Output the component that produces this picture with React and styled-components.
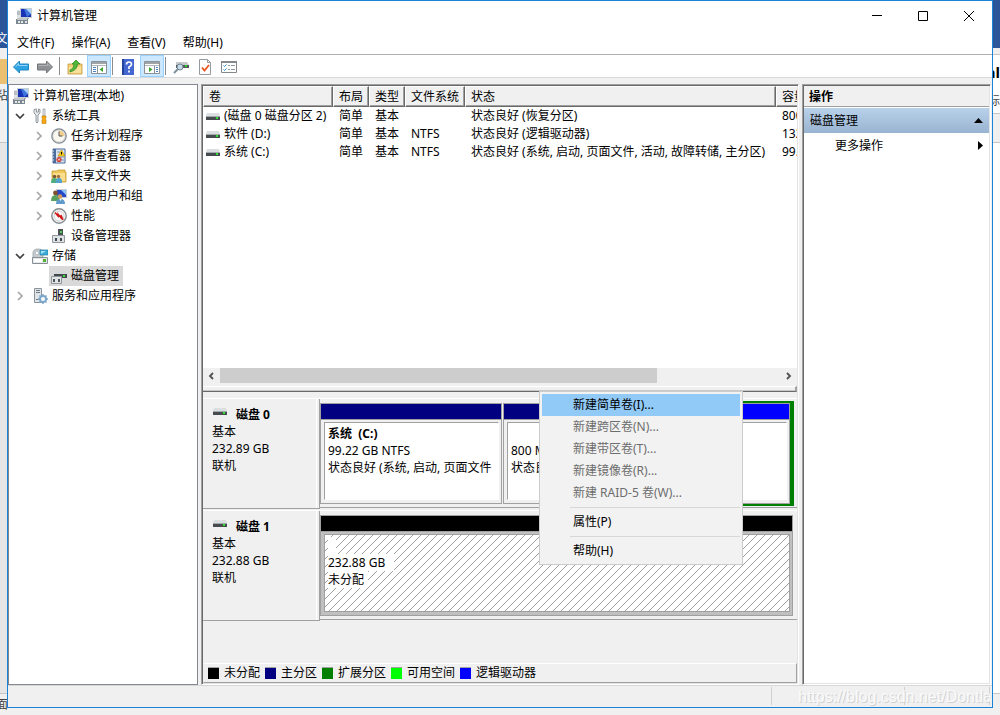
import React from "react";
import styled, { createGlobalStyle, css } from "styled-components";

const GlobalStyle = createGlobalStyle`
  *, *::before, *::after { box-sizing: border-box; }
  body {
    margin: 0;
    background: #f0f0f0;
    color: #000;
    font: 12px/18px "Noto Sans", "Noto Sans CJK SC", sans-serif;
    overflow: hidden;
  }
  button { font: inherit; color: inherit; margin: 0; padding: 0; border: 0; background: none; }
  svg { display: block; flex: none; }
  ul { list-style: none; margin: 0; padding: 0; }
`;

/* ---------- desktop behind the window ---------- */

const Desktop = styled.div`
  display: grid;
  grid-template-rows: 100vh;
  > * { grid-area: 1 / 1; }
`;

const Backdrop = styled.div`
  display: grid;
  grid-template-columns: 8px 1fr 8px;
  overflow: hidden;
`;

const Strip = styled.div`
  display: flex;
  flex-direction: column;
  overflow: hidden;
  white-space: nowrap;
`;

const Band = styled.div`
  flex: ${(p) => (p.$grow ? "1" : "none")};
  height: ${(p) => p.$h}px;
  display: flex;
  align-items: ${(p) => p.$align || "center"};
  justify-content: ${(p) => (p.$end ? "flex-end" : "flex-start")};
  overflow: hidden;
  background: ${(p) => p.$bg};
  color: ${(p) => p.$fg || "#444"};
  border-bottom: ${(p) => (p.$line ? "1px solid #c6c6c6" : "0")};
  font-weight: ${(p) => (p.$bold ? 700 : 400)};
  font-size: ${(p) => (p.$bold ? 15 : 12)}px;
`;

/* ---------- window frame ---------- */

const Window = styled.main`
  margin: 0 7px 7px;
  border: 1px solid #1883d7;
  background: #f0f0f0;
  display: flex;
  flex-direction: column;
  min-width: 0;
  overflow: hidden;
  position: relative;
`;

const TitleBar = styled.header`
  display: flex;
  align-items: center;
  height: 30px;
  background: #fff;
  padding-left: 8px;
  h1 { font-size: 12px; font-weight: 400; margin: 0 auto 0 5px; }
`;

const CaptionButton = styled.button`
  width: 46px;
  height: 30px;
  display: flex;
  align-items: center;
  justify-content: center;
`;

const MenuBar = styled.nav`
  display: flex;
  height: 24px;
  background: #fff;
  border-bottom: 1px solid #b0b0b0;
  padding-left: 1px;
  button { padding: 0 9px 0 8px; }
`;

const ToolBar = styled.div`
  display: flex;
  align-items: center;
  height: 23px;
  background: #fff;
  border-bottom: 1px solid #d9d9d9;
  padding-left: 1px;
`;

const Tool = styled.button`
  width: 24px;
  height: 22px;
  padding-top: 1px;
  display: flex;
  align-items: center;
  justify-content: center;
  ${(p) => p.$on && css`
    background: #cce8ff;
    border: 1px solid #99d1ff;
  `}
`;

const ToolDivider = styled.span`
  width: 1px;
  height: 18px;
  margin: 0 3px 0 ${(p) => (p.$wide ? 2 : 1)}px;
  background: #8c8c8c;
`;

const Body = styled.div`
  flex: 1;
  min-height: 0;
  display: grid;
  grid-template-columns: 190px minmax(0, 1fr) 189px;
  padding: 6px 1px 0 0;
`;

const sunken = css`
  border: 1px solid;
  border-color: #a0a0a0 #fff #fff #a0a0a0;
  padding: 1px;
  box-shadow: inset 1px 1px #696969, inset -1px -1px #e3e3e3;
`;

/* ---------- tree ---------- */

const TreePane = styled.nav`
  background: #fff;
  border: 1px solid #828790;
  padding-top: 1px;
`;

const TreeRow = styled.li`
  display: flex;
  align-items: center;
  height: 20px;
  padding-left: ${(p) => p.$level * 19}px;
`;

const Twisty = styled.button`
  width: 16px;
  height: 20px;
  margin: 0 4px 0 -16px;
  display: flex;
  align-items: center;
  justify-content: center;
  visibility: ${(p) => (p.$empty ? "hidden" : "visible")};
`;

const TreeItem = styled.button`
  display: flex;
  align-items: center;
  gap: 4px;
  height: 20px;
  line-height: 20px;
  padding: 0 4px 0 2px;
  margin-left: -2px;
  background: ${(p) => (p.$selected ? "#d9d9d9" : "transparent")};
`;

/* ---------- volume list ---------- */

const CenterPane = styled.section`
  ${sunken}
  margin: 0 3px 0 3px;
  display: flex;
  flex-direction: column;
  min-width: 0;
`;

const ListArea = styled.div`
  flex: 1;
  min-height: 0;
  background: #fff;
  overflow: hidden;
`;

const VolumeTable = styled.table`
  border-collapse: separate;
  border-spacing: 0;
  table-layout: fixed;
  width: 640px;
  th, td { padding: 0; text-align: left; font-weight: 400; white-space: nowrap; }
  th {
    height: 21px;
    line-height: 18px;
    padding: 1px 0 0 5px;
    background: #f0f0f0;
    border: 1px solid;
    border-color: #fff #696969 #696969 #fff;
    box-shadow: inset -1px -1px #a0a0a0;
  }
  td { height: 18px; line-height: 18px; padding-left: 6px; }
  td:first-child { padding-left: 3px; }
`;

const NameCell = styled.span`
  display: flex;
  align-items: center;
  gap: 4px;
`;

const ScrollBar = styled.div`
  height: 18px;
  display: flex;
  align-items: flex-start;
  background: #f0f0f0;
  button {
    width: 17px;
    height: 16px;
    display: flex;
    align-items: center;
    justify-content: center;
  }
`;

const Track = styled.div`
  flex: 1;
  height: 15px;
`;

const Thumb = styled.div`
  width: 78%;
  height: 15px;
  background: #cdcdcd;
`;

const Splitter = styled.div`
  height: 6px;
  border-top: 1px solid #fff;
  border-right: 2px solid #a0a0a0;
  border-bottom: 1px solid #696969;
  box-shadow: inset 0 -1px #c8c8c8;
`;

/* ---------- disk map ---------- */

const DiskPane = styled.div`
  position: relative;
  height: 291px;
  padding-top: 6px;
  display: flex;
  flex-direction: column;
`;

const DiskRow = styled.div`
  display: flex;
  height: 112px;
  padding-bottom: 1px;
  border-top: 1px solid #fff;
`;

const DiskCell = styled.div`
  flex: none;
  width: 117px;
  padding-right: 2px;
  border-right: 1px solid #a0a0a0;
  border-bottom: 1px solid #a0a0a0;
`;

const DiskLabel = styled.div`
  height: 100%;
  padding: 6px 0 0 9px;
  border-right: 1px solid #fff;
  line-height: 17px;
  b { display: flex; gap: 9px; padding-left: 1px; svg { margin-top: 2px; } }
`;

const DiskName = styled.span`
  padding-top: 1px;
`;

const Volumes = styled.div`
  flex: 1;
  min-width: 0;
  display: flex;
  margin-bottom: 1px;
  padding: 2px 3px 1px 0;
  border-bottom: 1px solid #a0a0a0;
`;

const Volume = styled.div`
  flex: ${(p) => (p.$width ? `0 0 ${p.$width}px` : "1")};
  min-width: 0;
  display: flex;
  flex-direction: column;
  margin: ${(p) => (p.$framed ? "0" : "2px 1px 2px 0")};
  border: 1px solid #a0a0a0;
  padding: 0;
  background: ${(p) => (p.$selected ? "#c0c0c0" : "#f0f0f0")};
`;

const VolumeBar = styled.div`
  height: 16px;
  background: ${(p) => p.$color};
  border-bottom: 1px solid #a0a0a0;
`;

const VolumeBox = styled.div`
  flex: 1;
  min-height: 0;
  display: grid;
  margin: 2px 2px 3px 3px;
  background: #fff;
  border: 1px solid;
  border-color: ${(p) => (p.$selected ? "#a0a0a0" : "#a0a0a0 #fff #fff #a0a0a0")};
  overflow: hidden;
  > * { grid-area: 1 / 1; }
`;

const VolumeText = styled.div`
  display: flex;
  flex-direction: column;
  align-items: flex-start;
  padding: 2px 0 0 3px;
  line-height: 17px;
  white-space: pre;
  overflow: hidden;
  span, b { min-height: 17px; }
`;

const WhiteLine = styled.span`
  background: #fff;
  padding-right: ${(p) => p.$pad}px;
`;

const Extended = styled.div`
  flex: 1;
  min-width: 0;
  display: flex;
  padding: 2px 4px;
  background: #008000;
`;

const Legend = styled.div`
  display: flex;
  align-items: center;
  gap: 5px;
  height: 20px;
  margin-top: auto;
  padding-left: 4px;
  border: 1px solid;
  border-color: #fff #a0a0a0 #a0a0a0 transparent;
  white-space: nowrap;
  span { display: flex; align-items: center; gap: 5px; }
`;

const Swatch = styled.i`
  width: 11px;
  height: 12px;
  background: ${(p) => p.$color};
  border-top: 1px solid #a0a0a0;
`;

/* ---------- context menu ---------- */

const ContextMenu = styled.div`
  position: absolute;
  left: 336px;
  top: -1px;
  width: 204px;
  padding: 2px;
  background: #f2f2f2;
  border: 1px solid #ccc;
  button {
    display: block;
    width: 100%;
    height: 22px;
    line-height: 22px;
    padding-left: 31px;
    text-align: left;
  }
  button:disabled { color: #6d6d6d; }
  hr { height: 1px; margin: 3px 0 3px 28px; border: 0; background: #d7d7d7; }
`;

const MenuChoice = styled.button`
  && { background: ${(p) => (p.$active ? "#91c9f7" : "transparent")}; }
`;

/* ---------- actions ---------- */

const ActionsPane = styled.aside`
  ${sunken}
  background: #fff;
  h2 {
    margin: 0 0 1px;
    padding: 1px 0 0 5px;
    height: 21px;
    font-size: 12px;
    line-height: 19px;
    font-weight: 700;
    background: #f0f0f0;
    border-bottom: 1px solid #a0a0a0;
  }
`;

const ActionRow = styled.button`
  display: flex;
  align-items: center;
  justify-content: space-between;
  width: 100%;
  height: 25px;
  padding: 0 6px 0 ${(p) => (p.$head ? 6 : 31)}px;
  background: ${(p) => (p.$head ? "linear-gradient(#b9d1ea, #99b4d1)" : "#fff")};
`;

/* ---------- status bar ---------- */

const StatusBar = styled.footer`
  height: 22px;
  display: flex;
  padding: 1px 2px 2px 0;
  border-top: 1px solid #d7d7d7;
`;

const StatusCell = styled.div`
  flex: ${(p) => (p.$width ? `0 0 ${p.$width}px` : "1")};
  border-right: 1px solid #d0d0d0;
`;

const Watermark = styled.div`
  position: absolute;
  right: 1px;
  bottom: 0;
  width: 193px;
  overflow: hidden;
  white-space: nowrap;
  font: 16px/20px "Liberation Sans", sans-serif;
  color: #fafafa;
  text-shadow: 1px 1px #d2d2d2;
`;

/* ---------- icons ---------- */

const Svg = ({ w = 16, h = 16, children }) => (
  <svg width={w} height={h} viewBox={`0 0 ${w} ${h}`} fill="none" aria-hidden="true">{children}</svg>
);

const ComputerIcon = () => (
  <Svg>
    <path d="M1 2h3v9H1z" fill="#dfe3e6" />
    <path d="M1 4h3M1 6h3" stroke="#8e979f" />
    <path d="M4 0h12v10H4z" fill="#c9ced2" />
    <path d="M5 1h10v8H5z" fill="#1732b4" />
    <path d="M8 1h7v5l-4 3z" fill="#3f74dc" />
    <path d="M10 1h5v5z" fill="#a9d2fb" />
    <path d="M8 10h5v1H8z" fill="#a6adb2" />
    <path d="M0 11h12v5H0z" fill="#7b868e" />
    <path d="M1 10h10v2H1z" fill="#c0c6ca" />
    <path d="M2 13h2v2H2zM5 13h2v2H5zM9 13h2v2H9z" fill="#e3e8ea" />
  </Svg>
);
const ToolsIcon = () => (
  <Svg>
    <path d="M2 1.500v3.500l2 2v7q1 2 2 0V7l2-2V1.500L6.500 1v3h-2V1z" fill="#e4e7e9" stroke="#7c858b" strokeWidth=".8" />
    <path d="M11 1h2v7h-2z" fill="#eef0f1" stroke="#8a9298" strokeWidth=".7" />
    <path d="M10 8h4v2l-.7 1 .7 1v3.500h-4V12l.7-1-.7-1z" fill="#f4a915" stroke="#c77c05" strokeWidth=".6" />
  </Svg>
);
const ClockIcon = () => (
  <Svg>
    <circle cx="8" cy="8" r="7.200" fill="#d3d7da" stroke="#858b91" strokeWidth="1.200" />
    <circle cx="8" cy="8" r="5.600" fill="#fbf8ee" />
    <path d="M8 8V2.500A5.500 5.500 0 0 1 13.500 8z" fill="#f2cf8c" />
    <path d="M8 3.500V8h3.500" stroke="#4f565c" />
  </Svg>
);
const EventIcon = () => (
  <Svg>
    <path d="M2 1h12v14H2z" fill="#dce6f3" stroke="#4a6a9a" />
    <path d="M2 1h3v14H2z" fill="#4d6c9e" />
    <path d="M1 3h2M1 6h2M1 9h2M1 12h2" stroke="#cfd8e4" />
    <path d="M7 9h6M7 12h6M6 4h3" stroke="#7c92b4" />
    <path d="M10.500 2 14 8H7z" fill="#ffd21e" stroke="#b98c00" strokeWidth=".6" />
    <path d="M10.500 4v2.500" stroke="#000" />
    <circle cx="8" cy="11.500" r="2.600" fill="#d23c32" />
    <path d="m7 10.500 2 2m0-2-2 2" stroke="#fff" strokeWidth=".8" />
  </Svg>
);
const ShareIcon = () => (
  <Svg>
    <path d="M1 3h5l1-1h7v2h1v10H1z" fill="#f0c95b" stroke="#c79a33" strokeWidth=".8" />
    <path d="M2 5h12v8H2z" fill="#fadf8e" />
    <circle cx="3.500" cy="8.500" r="1.700" fill="#7b5432" />
    <circle cx="7.500" cy="8.500" r="1.700" fill="#a8703e" />
    <path d="M0 15q0-5 3.500-5T7 15z" fill="#4fae7b" />
    <path d="M4.500 15q0-5 3.500-5t3 5z" fill="#54a3cc" />
  </Svg>
);
const UsersIcon = () => (
  <Svg>
    <path d="M5 1h11v9H5z" fill="#c7ced6" />
    <path d="M6 2h9v7H6z" fill="#2448c8" />
    <path d="M10 2h5v5z" fill="#8cc1f5" />
    <circle cx="4.500" cy="5" r="2.400" fill="#80522d" />
    <path d="M0 13q0-6 4.500-6T9 13z" fill="#58a05b" />
    <circle cx="9" cy="8.500" r="2.300" fill="#d49a5b" />
    <path d="M5 16q0-5 4.500-5t4.500 5z" fill="#5f9aca" />
    <path d="m8.500 11 1 2 1-2z" fill="#fff" />
  </Svg>
);
const PerfIcon = () => (
  <Svg>
    <circle cx="8" cy="8" r="7.200" fill="#f8f8f8" stroke="#868c91" strokeWidth="1.400" />
    <circle cx="8" cy="8" r="5" stroke="#c3c7ca" strokeWidth=".8" />
    <path d="M4 4.500 7 8V6l3 4V7l2 5" stroke="#d01818" strokeWidth="1.400" />
  </Svg>
);
const DeviceIcon = () => (
  <Svg>
    <path d="M7 1h5v8H7z" fill="#4c5357" />
    <path d="M9 3h2v2H9z" fill="#48d048" />
    <path d="M1.500 7.500h12v7h-12z" fill="#dfe2e4" stroke="#92999d" />
    <path d="M4 10h2v3H4zM9 10h2v3H9z" fill="#43494d" />
  </Svg>
);
const StorageIcon = () => (
  <Svg>
    <path d="M1 5q0-4 5-4t5 4v5H1z" fill="#c6ccd0" stroke="#9aa2a8" strokeWidth=".8" />
    <circle cx="5" cy="5" r="1.800" fill="#fff" stroke="#9ca4a9" strokeWidth=".6" />
    <path d="M8 2h8v5H8z" fill="#3cabd8" stroke="#2683ab" strokeWidth=".7" />
    <path d="M9 3h5L9 6z" fill="#a7e1f6" />
    <path d="M.5 9.500h15v6H.5z" fill="#e5e7e9" stroke="#878f94" />
    <path d="M2 11h8v3H2z" fill="#fff" />
    <path d="M11 11h3v3h-3z" fill="#50b332" />
  </Svg>
);
const DiskMgmtIcon = () => (
  <Svg>
    <path d="M4 3h11l1 3H3z" fill="#d4d8da" />
    <path d="M3 6h13v4H3z" fill="#42484b" />
    <path d="M12 7h2v2h-2z" fill="#3ee03e" />
    <path d="M.5 8.500h10v7H.5z" fill="#e1e4e5" stroke="#91989c" />
    <path d="M2 11h2v3H2zM7 11h2v3H7z" fill="#50565a" />
  </Svg>
);
const ServicesIcon = () => (
  <Svg>
    <path d="M2.500.5h7v14h-7z" fill="#e1e5e8" stroke="#8b949b" />
    <path d="M4 2.500h4M4 4.500h4M4 11.500h3" stroke="#6f7c86" />
    <circle cx="11" cy="11" r="3" stroke="#7fa7c9" strokeWidth="2" fill="#fff" />
    <path d="M11 6v2M11 14v2M6 11h2M14 11h2M7.500 7.500 9 9M13 13l1.500 1.500M14.500 7.500 13 9M9 13l-1.500 1.500" stroke="#7fa7c9" strokeWidth="1.500" />
  </Svg>
);
const DriveIcon = () => (
  <Svg w={14} h={9}>
    <path d="M1 1h12l1 3H0z" fill="#dcdfe0" />
    <path d="M0 4h14v1H0z" fill="#a4aaad" />
    <path d="M0 5h14v3H0z" fill="#454b4e" />
    <path d="M10 5h2v2h-2z" fill="#2de02d" />
  </Svg>
);
const ArrowIcon = ({ forward }) => (
  <Svg>
    <path
      d={forward ? "M15.500 8 9.500 2v3H.5v6h9v3z" : "M.5 8 6.500 2v3h9v6h-9v3z"}
      fill={forward ? "#8e9194" : "#2fa3e2"}
      stroke={forward ? "#737679" : "#1f86c4"}
    />
    <path d={forward ? "M1.500 6.500h9V4.500L13.500 8" : "M2.500 8l3-3.500v2h9"} stroke={forward ? "#b0b2b4" : "#93d5fa"} />
  </Svg>
);
const FolderUpIcon = () => (
  <Svg>
    <path d="M1 5h5l1-2h3l1 2h4v10H1z" fill="#f2d079" stroke="#c59a3d" strokeWidth=".8" />
    <path d="M2 8h12v6H2z" fill="#f9e09a" />
    <path d="M3 11q4-1 4-6H5l4-4 4 4h-2.500q0 6-7.500 8z" fill="#4fb83c" stroke="#2d8a20" strokeWidth=".7" />
  </Svg>
);
const PanelIcon = ({ right }) => (
  <Svg>
    <path d="M.5 2.500h15v12H.5z" fill="#fff" stroke="#8a9298" />
    <path d="M1 3h14v2H1z" fill="#9ea5aa" />
    <path d="M1 6.500h14" stroke="#b2b8bc" />
    <path d={right ? "M10.500 7v8" : "M6.500 7v8"} stroke="#8a9298" />
    <path d={right ? "M12 8.500h2M12 10.500h2M12 12.500h2" : "M2 8.500h3M2 10.500h3M2 12.500h3"} stroke="#4b86c4" />
    <path d={right ? "m5 8 3.500 2.500L5 13z" : "M12 8l-3.500 2.500L12 13z"} fill="#3ba52c" />
  </Svg>
);
const HelpIcon = () => (
  <Svg>
    <path d="M2 0h12v16H2z" fill="#4468d0" />
    <path d="M2 0h2v16H2z" fill="#24449c" />
    <path d="M6.500 5.500q0-2.500 2.500-2.500t2.500 2.200Q11.500 7 9 8v2M9 11.500v2" stroke="#fff" strokeWidth="1.700" />
  </Svg>
);
const DriveSearchIcon = () => (
  <Svg>
    <path d="M3 3h11l2 3H3z" fill="#c6cacd" />
    <path d="M3 6h13v3H3z" fill="#4f5659" />
    <path d="M12 6h2v2h-2z" fill="#2dd62d" />
    <path d="m1 14 4-4" stroke="#7d8f9b" strokeWidth="2" />
    <circle cx="7" cy="8" r="3" fill="#c4dcea" stroke="#70828e" />
  </Svg>
);
const CheckDocIcon = () => (
  <Svg>
    <path d="M2.500.5h8l3 3v12h-11z" fill="#fdfdfd" stroke="#949a9f" />
    <path d="M10.500.5v3h3" stroke="#949a9f" />
    <path d="m5 8.500 2.500 3L12 6" stroke="#ea5420" strokeWidth="1.800" />
  </Svg>
);
const CheckListIcon = () => (
  <Svg>
    <path d="M.5 2.500h15v11H.5z" fill="#fff" stroke="#83898d" />
    <path d="M0 3h16" stroke="#83898d" strokeWidth="2" />
    <path d="m2.500 6.500 1 1 2-2M2.500 10.500l1 1 2-2" stroke="#3187ca" />
    <path d="M7 6.500h2M10 6.500h4M7 10.500h2M10 10.500h4" stroke="#8d969c" />
  </Svg>
);
const Chevron = ({ open }) =>
  open ? (
    <Svg w={10} h={10}><path d="m1 3 4 4 4-4" stroke="#404040" strokeWidth="1.700" /></Svg>
  ) : (
    <Svg w={10} h={10}><path d="m3 1 4 4-4 4" stroke="#a6a6a6" strokeWidth="1.700" /></Svg>
  );
const ScrollChevron = ({ right }) => (
  <Svg w={8} h={8}><path d={right ? "m2 1 3 3-3 3" : "M5 1 2 4l3 3"} stroke="#505050" strokeWidth="1.800" /></Svg>
);

/* ---------- data ---------- */

const tree = [
  { level: 0, icon: ComputerIcon, text: "计算机管理(本地)" },
  { level: 1, icon: ToolsIcon, text: "系统工具", state: "open" },
  { level: 2, icon: ClockIcon, text: "任务计划程序", state: "closed" },
  { level: 2, icon: EventIcon, text: "事件查看器", state: "closed" },
  { level: 2, icon: ShareIcon, text: "共享文件夹", state: "closed" },
  { level: 2, icon: UsersIcon, text: "本地用户和组", state: "closed" },
  { level: 2, icon: PerfIcon, text: "性能", state: "closed" },
  { level: 2, icon: DeviceIcon, text: "设备管理器" },
  { level: 1, icon: StorageIcon, text: "存储", state: "open" },
  { level: 2, icon: DiskMgmtIcon, text: "磁盘管理", selected: true },
  { level: 1, icon: ServicesIcon, text: "服务和应用程序", state: "closed" },
];

const columns = [["卷", 130], ["布局", 36], ["类型", 36], ["文件系统", 60], ["状态", 311], ["容量", 67]];

const rows = [
  ["(磁盘 0 磁盘分区 2)", "简单", "基本", "", "状态良好 (恢复分区)", "800 MB"],
  ["软件 (D:)", "简单", "基本", "NTFS", "状态良好 (逻辑驱动器)", "132.87 GB"],
  ["系统 (C:)", "简单", "基本", "NTFS", "状态良好 (系统, 启动, 页面文件, 活动, 故障转储, 主分区)", "99.22 GB"],
];

const legend = [
  ["#000", "未分配"],
  ["#000080", "主分区"],
  ["#008000", "扩展分区"],
  ["#0f0", "可用空间"],
  ["#00f", "逻辑驱动器"],
];

const DiskHeader = ({ name, size }) => (
  <DiskCell>
    <DiskLabel>
      <b><DriveIcon /><DiskName>{name}</DiskName></b>
      <div>基本</div>
      <div>{size}</div>
      <div>联机</div>
    </DiskLabel>
  </DiskCell>
);

const VolumeBlock = ({ color, width, framed, title, lines }) => (
  <Volume $width={width} $framed={framed}>
    <VolumeBar $color={color} />
    <VolumeBox>
      <VolumeText>
        <b>{title}</b>
        {lines.map((l) => <span key={l}>{l}</span>)}
      </VolumeText>
    </VolumeBox>
  </Volume>
);

export default function App() {
  return (
    <>
      <GlobalStyle />
      <Desktop>
        <Backdrop aria-hidden="true">
          <Strip>
            <Band $h={48} $bg="#2b579a" $fg="#fff" $end $align="flex-end">文</Band>
            <Band $h={11} $bg="#f0f0f0" />
            <Band $h={25} $bg="#ecc071" />
            <Band $h={24} $bg="#f0f0f0" $end>粘</Band>
            <Band $h={35} $bg="#f0f0f0" $line />
            <Band $grow $bg="#e6e6e6" $line />
            <Band $h={21} $bg="#f0f0f0" $end>页面</Band>
          </Strip>
          <Strip />
          <Strip>
            <Band $h={48} $bg="#2b579a" />
            <Band $h={7} $bg="#f0f0f0" $line />
            <Band $h={33} $bg="#fff" $fg="#000" $bold $end>al</Band>
            <Band $h={26} $bg="#fff" $line $end>标</Band>
            <Band $h={29} $bg="#f0f0f0" $line />
            <Band $grow $bg="#fff" $line />
            <Band $h={21} $bg="#f0f0f0" />
          </Strip>
        </Backdrop>

        <Window>
          <TitleBar>
            <ComputerIcon />
            <h1>计算机管理</h1>
            <CaptionButton aria-label="最小化"><Svg w={10} h={10}><path d="M0 4.500h10" stroke="#000" /></Svg></CaptionButton>
            <CaptionButton aria-label="最大化"><Svg w={10} h={10}><path d="M.5.5h9v9h-9z" stroke="#000" /></Svg></CaptionButton>
            <CaptionButton aria-label="关闭"><Svg w={10} h={10}><path d="m0 0 10 10M10 0 0 10" stroke="#000" /></Svg></CaptionButton>
          </TitleBar>
          <MenuBar>
            <button>文件(F)</button>
            <button>操作(A)</button>
            <button>查看(V)</button>
            <button>帮助(H)</button>
          </MenuBar>
          <ToolBar>
            <Tool aria-label="后退"><ArrowIcon /></Tool>
            <Tool aria-label="前进"><ArrowIcon forward /></Tool>
            <ToolDivider $wide />
            <Tool aria-label="向上"><FolderUpIcon /></Tool>
            <Tool $on aria-label="显示控制台树"><PanelIcon /></Tool>
            <ToolDivider />
            <Tool aria-label="帮助"><HelpIcon /></Tool>
            <Tool $on aria-label="显示操作窗格"><PanelIcon right /></Tool>
            <ToolDivider />
            <Tool aria-label="查找磁盘"><DriveSearchIcon /></Tool>
            <Tool aria-label="检查"><CheckDocIcon /></Tool>
            <Tool aria-label="属性列表"><CheckListIcon /></Tool>
          </ToolBar>

          <Body>
            <TreePane>
              <ul>
                {tree.map(({ level, icon: Icon, text, state, selected }) => (
                  <TreeRow key={text} $level={level}>
                    <Twisty $empty={!state} aria-label={text}><Chevron open={state === "open"} /></Twisty>
                    <TreeItem $selected={selected}><Icon />{text}</TreeItem>
                  </TreeRow>
                ))}
              </ul>
            </TreePane>

            <CenterPane>
              <ListArea>
                <VolumeTable>
                  <colgroup>{columns.map(([name, w]) => <col key={name} width={w} />)}</colgroup>
                  <thead><tr>{columns.map(([name]) => <th key={name}>{name}</th>)}</tr></thead>
                  <tbody>
                    {rows.map(([name, ...cells]) => (
                      <tr key={name}>
                        <td><NameCell><DriveIcon />{name}</NameCell></td>
                        {cells.map((c, i) => <td key={i}>{c}</td>)}
                      </tr>
                    ))}
                  </tbody>
                </VolumeTable>
              </ListArea>
              <ScrollBar>
                <button aria-label="向左滚动"><ScrollChevron /></button>
                <Track><Thumb /></Track>
                <button aria-label="向右滚动"><ScrollChevron right /></button>
              </ScrollBar>
              <Splitter />

              <DiskPane>
                <DiskRow>
                  <DiskHeader name="磁盘 0" size="232.89 GB" />
                  <Volumes>
                    <VolumeBlock color="#000080" width={182} title="系统  (C:)" lines={["99.22 GB NTFS", "状态良好 (系统, 启动, 页面文件"]} />
                    <VolumeBlock color="#000080" width={92} title="" lines={["800 MB", "状态良好 (恢复分区)"]} />
                    <Extended>
                      <VolumeBlock framed color="#00f" title="软件  (D:)" lines={["132.87 GB NTFS", "状态良好 (逻辑驱动器)"]} />
                    </Extended>
                  </Volumes>
                </DiskRow>
                <DiskRow>
                  <DiskHeader name="磁盘 1" size="232.88 GB" />
                  <Volumes>
                    <Volume $selected>
                      <VolumeBar $color="#000" />
                      <VolumeBox $selected>
                        <svg width="100%" height="100%" shapeRendering="crispEdges" aria-hidden="true">
                          <defs>
                            <pattern id="hatch" width="8" height="8" patternUnits="userSpaceOnUse">
                              <path d="M-1 9 9-1" stroke="#a0a0a0" strokeWidth="1" />
                            </pattern>
                          </defs>
                          <rect width="100%" height="100%" fill="url(#hatch)" />
                        </svg>
                        <VolumeText>
                          <WhiteLine $pad={8} />
                          <WhiteLine $pad={9}>232.88 GB</WhiteLine>
                          <WhiteLine $pad={4}>未分配</WhiteLine>
                        </VolumeText>
                      </VolumeBox>
                    </Volume>
                  </Volumes>
                </DiskRow>
                <Legend>
                  {legend.map(([color, text]) => (
                    <span key={text}><Swatch $color={color} />{text}</span>
                  ))}
                </Legend>

                <ContextMenu>
                  <MenuChoice $active>新建简单卷(I)...</MenuChoice>
                  <MenuChoice disabled>新建跨区卷(N)...</MenuChoice>
                  <MenuChoice disabled>新建带区卷(T)...</MenuChoice>
                  <MenuChoice disabled>新建镜像卷(R)...</MenuChoice>
                  <MenuChoice disabled>新建 RAID-5 卷(W)...</MenuChoice>
                  <hr />
                  <MenuChoice>属性(P)</MenuChoice>
                  <hr />
                  <MenuChoice>帮助(H)</MenuChoice>
                </ContextMenu>
              </DiskPane>
            </CenterPane>

            <ActionsPane>
              <h2>操作</h2>
              <ActionRow $head>
                磁盘管理
                <Svg w={9} h={5}><path d="M0 5 4.500 0 9 5z" fill="#000" /></Svg>
              </ActionRow>
              <ActionRow>
                更多操作
                <Svg w={5} h={9}><path d="M0 0l5 4.500L0 9z" fill="#000" /></Svg>
              </ActionRow>
            </ActionsPane>
          </Body>

          <StatusBar>
            <StatusCell />
            <StatusCell $width={133} />
            <StatusCell $width={85} />
          </StatusBar>
          <Watermark>https://blog.csdn.net/Dontla</Watermark>
        </Window>
      </Desktop>
    </>
  );
}
